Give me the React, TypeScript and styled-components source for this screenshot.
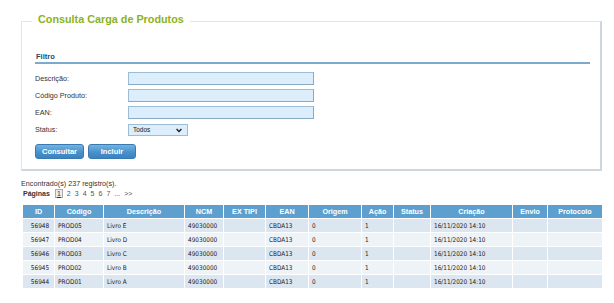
import React from "react";
import styled, { createGlobalStyle } from "styled-components";

const GlobalStyle = createGlobalStyle`
  html, body { margin: 0; padding: 0; background: #ffffff; }
  body { font-family: "Liberation Sans", Arial, sans-serif; color: #333; }
  * { box-sizing: border-box; }
`;

const Page = styled.div`
  width: 614px;
  height: 303px;
  overflow: hidden;
  padding-top: 12px;
`;

const Panel = styled.fieldset`
  margin: 0 12px 0 21px;
  padding: 0 10px 10px 13px;
  border: 1px solid #dde6eb;
  border-right: 2px solid #cdd6de;
  border-bottom: 2px solid #cdd6de;
  min-width: 0;
`;

const Title = styled.legend`
  margin-left: -3px;
  padding: 0 6px 4px 6px;
  font-family: "Liberation Sans", Arial, sans-serif;
  font-weight: bold;
  font-size: 10.8px;
  line-height: 14px;
  color: #8cb21c;
`;

const SectionHeader = styled.div`
  margin-top: 22px;
  padding-left: 1px;
  font-size: 7.5px;
  font-weight: bold;
  line-height: 10px;
  color: #2b4866;
  border-bottom: 2px solid #7da9cb;
`;

const Form = styled.div`
  margin-top: 8px;
  display: grid;
  grid-template-columns: 93px 1fr;
  grid-auto-rows: 13px;
  row-gap: 4px;
  align-items: center;
`;

const Label = styled.label`
  font-size: 7.2px;
  line-height: 13px;
  color: #333;
`;

const TextInput = styled.input`
  display: block;
  width: 186px;
  height: 13px;
  margin: 0;
  padding: 0 3px;
  background: #dcedfb;
  border: 1px solid #9dbdd4;
  border-right-color: #88aac3;
  border-bottom-color: #88aac3;
  outline: none;
`;

const SelectWrap = styled.div`
  position: relative;
  width: 60px;
  height: 12px;
`;

const Select = styled.select`
  display: block;
  appearance: none;
  width: 60px;
  height: 12px;
  margin: 0;
  padding: 0 0 0 4px;
  background: #dcedfb;
  border: 1px solid #9dbdd4;
  font-family: "Liberation Sans", Arial, sans-serif;
  font-size: 6.5px;
  color: #222;
  line-height: 10px;
  outline: none;
`;

const Chevron = styled.svg`
  position: absolute;
  right: 6px;
  top: 4px;
  width: 6px;
  height: 5px;
  pointer-events: none;
`;

const Buttons = styled.div`
  display: flex;
  gap: 4px;
  margin-top: 8px;
`;

const Button = styled.button<{ $w: number }>`
  width: ${(p) => p.$w}px;
  height: 15px;
  padding: 0;
  border: 1px solid #3a7ab0;
  border-radius: 3px;
  background: linear-gradient(#72b3e2, #4a91cb 55%, #3a83c0);
  color: #ffffff;
  font-family: "Liberation Sans", Arial, sans-serif;
  font-weight: bold;
  font-size: 7.5px;
  line-height: 13px;
`;

const Found = styled.div`
  margin: 8px 0 0 21px;
  font-size: 7.2px;
  line-height: 9px;
  color: #333;
`;

const Pager = styled.div`
  margin: 1px 0 0 23px;
  display: flex;
  align-items: center;
  gap: 4px;
  font-size: 7px;
  line-height: 9px;
  color: #555;
`;

const PagerTitle = styled.span`
  font-weight: bold;
  color: #333;
  margin-right: 1px;
`;

const PageBox = styled.span`
  display: inline-block;
  width: 8px;
  height: 9px;
  border: 1px solid #aaa;
  background: #eee;
  text-align: center;
  text-decoration: underline;
  line-height: 7px;
  color: #333;
`;

const Table = styled.table`
  margin: 6px 0 0 22px;
  width: 580px;
  table-layout: fixed;
  border-collapse: collapse;
`;

const Th = styled.th`
  height: 14px;
  padding: 0;
  background: #5d9fcf;
  border: 1px solid #ffffff;
  color: #ffffff;
  font-family: "Liberation Sans", Arial, sans-serif;
  font-weight: bold;
  font-size: 7.2px;
  text-align: center;
`;

const Tr = styled.tr<{ $dark: boolean }>`
  background: ${(p) => (p.$dark ? "#dce6f0" : "#eef3f8")};
`;

const Td = styled.td<{ $center?: boolean }>`
  height: 14px;
  padding: 0 0 0 3px;
  border: 1px solid #ffffff;
  font-family: "DejaVu Sans Condensed", "DejaVu Sans", sans-serif;
  font-stretch: condensed;
  font-size: 6.4px;
  color: #222;
  text-align: ${(p) => (p.$center ? "center" : "left")};
  white-space: nowrap;
  overflow: hidden;
`;

const columns = [
  { name: "ID", w: 32 },
  { name: "Código", w: 49 },
  { name: "Descrição", w: 81 },
  { name: "NCM", w: 39 },
  { name: "EX TIPI", w: 42 },
  { name: "EAN", w: 43 },
  { name: "Origem", w: 53 },
  { name: "Ação", w: 32 },
  { name: "Status", w: 37 },
  { name: "Criação", w: 82 },
  { name: "Envio", w: 35 },
  { name: "Protocolo", w: 55 },
];

const rows = [
  { id: "56948", cod: "PROD05", desc: "Livro E" },
  { id: "56947", cod: "PROD04", desc: "Livro D" },
  { id: "56946", cod: "PROD03", desc: "Livro C" },
  { id: "56945", cod: "PROD02", desc: "Livro B" },
  { id: "56944", cod: "PROD01", desc: "Livro A" },
];

export default function App() {
  return (
    <>
      <GlobalStyle />
      <Page>
        <Panel>
          <Title>Consulta Carga de Produtos</Title>
          <SectionHeader>Filtro</SectionHeader>
          <Form>
            <Label>Descrição:</Label>
            <TextInput />
            <Label>Código Produto:</Label>
            <TextInput />
            <Label>EAN:</Label>
            <TextInput />
            <Label>Status:</Label>
            <SelectWrap>
              <Select defaultValue="Todos">
                <option>Todos</option>
              </Select>
              <Chevron viewBox="0 0 6 5">
                <path d="M0.6 1 L3 3.6 L5.4 1" fill="none" stroke="#111" strokeWidth="1.3" />
              </Chevron>
            </SelectWrap>
          </Form>
          <Buttons>
            <Button $w={49}>Consultar</Button>
            <Button $w={48}>Incluir</Button>
          </Buttons>
        </Panel>
        <Found>Encontrado(s) 237 registro(s).</Found>
        <Pager>
          <PagerTitle>Páginas</PagerTitle>
          <PageBox>1</PageBox>
          <span>2</span>
          <span>3</span>
          <span>4</span>
          <span>5</span>
          <span>6</span>
          <span>7</span>
          <span>...</span>
          <span>&gt;&gt;</span>
        </Pager>
        <Table>
          <colgroup>
            {columns.map((c) => (
              <col key={c.name} style={{ width: c.w }} />
            ))}
          </colgroup>
          <thead>
            <tr>
              {columns.map((c) => (
                <Th key={c.name}>{c.name}</Th>
              ))}
            </tr>
          </thead>
          <tbody>
            {rows.map((r, i) => (
              <Tr key={r.id} $dark={i % 2 === 0}>
                <Td $center>{r.id}</Td>
                <Td>{r.cod}</Td>
                <Td>{r.desc}</Td>
                <Td>49030000</Td>
                <Td></Td>
                <Td>CBDA13</Td>
                <Td>0</Td>
                <Td>1</Td>
                <Td></Td>
                <Td>16/11/2020 14:10</Td>
                <Td></Td>
                <Td></Td>
              </Tr>
            ))}
          </tbody>
        </Table>
      </Page>
    </>
  );
}
